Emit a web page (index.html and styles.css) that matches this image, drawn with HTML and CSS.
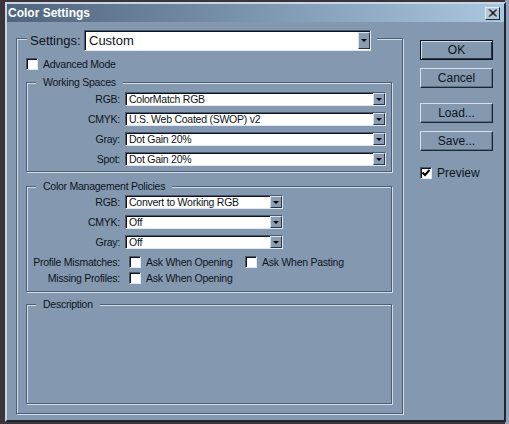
FILE: index.html
```html
<!DOCTYPE html>
<html lang="en">
<head>
    <meta charset="UTF-8">
    <title>Color Settings</title>
    <link rel="stylesheet" href="styles.css">
</head>
<body>

    <div class="window">
        <div class="titlebar">
            <span class="title">Color Settings</span>
            <div class="close">
                <svg width="9" height="8" viewBox="0 0 9 8"><path d="M1 0.5 L8 7.5 M2 0.5 L9 7.5 M8 0.5 L1 7.5 M9 0.5 L2 7.5" stroke="#000" stroke-width="1"/></svg>
            </div>
        </div>

        <div class="content">
            <div class="group outer">
                <div class="settings-legend">
                    <span class="settings-label">Settings:</span>
                    <div class="select big"><span class="value">Custom</span><span class="arrow"></span></div>
                </div>

                <div class="check-row adv">
                    <span class="check"></span><span>Advanced Mode</span>
                </div>

                <div class="group ws">
                    <div class="legend">Working Spaces</div>
                    <div class="rows">
                        <span class="lbl">RGB:</span>
                        <div class="select wide"><span class="value">ColorMatch RGB</span><span class="arrow"></span></div>
                        <span class="lbl">CMYK:</span>
                        <div class="select wide"><span class="value">U.S. Web Coated (SWOP) v2</span><span class="arrow"></span></div>
                        <span class="lbl">Gray:</span>
                        <div class="select wide"><span class="value">Dot Gain 20%</span><span class="arrow"></span></div>
                        <span class="lbl">Spot:</span>
                        <div class="select wide"><span class="value">Dot Gain 20%</span><span class="arrow"></span></div>
                    </div>
                </div>

                <div class="group cm">
                    <div class="legend">Color Management Policies</div>
                    <div class="rows">
                        <span class="lbl">RGB:</span>
                        <div class="select narrow"><span class="value">Convert to Working RGB</span><span class="arrow"></span></div>
                        <span class="lbl">CMYK:</span>
                        <div class="select narrow"><span class="value">Off</span><span class="arrow"></span></div>
                        <span class="lbl">Gray:</span>
                        <div class="select narrow"><span class="value">Off</span><span class="arrow"></span></div>
                    </div>
                    <div class="checks">
                        <span class="lbl">Profile Mismatches:</span>
                        <div class="opts">
                            <div class="check-row opt"><span class="check"></span><span>Ask When Opening</span></div>
                            <div class="check-row"><span class="check"></span><span>Ask When Pasting</span></div>
                        </div>
                        <span class="lbl">Missing Profiles:</span>
                        <div class="opts">
                            <div class="check-row opt"><span class="check"></span><span>Ask When Opening</span></div>
                        </div>
                    </div>
                </div>

                <div class="group desc">
                    <div class="legend">Description</div>
                </div>
            </div>

            <div class="side">
                <div class="btn default">OK</div>
                <div class="btn">Cancel</div>
                <div class="btn gap">Load...</div>
                <div class="btn">Save...</div>
                <div class="check-row preview">
                    <span class="check">
                        <svg width="8" height="8" viewBox="0 0 8 8"><path d="M0.5 3.5 L3 6 L7.5 1" stroke="#000" stroke-width="2" fill="none"/></svg>
                    </span>
                    <span>Preview</span>
                </div>
            </div>
        </div>
    </div>

</body>
</html>
```

FILE: styles.css
```css
* {
    box-sizing: border-box;
    margin: 0;
    padding: 0;
}

body {
    background: linear-gradient(to right, #3b3439 calc(100% - 4px), #8ea2b9 0);
    font-family: "Liberation Sans", Arial, sans-serif;
    font-size: 10.5px;
    letter-spacing: -0.25px;
    color: #0d1420;
    padding: 2px 0 0 5px;
    height: 424px;
    overflow: hidden;
}

.window {
    width: 501px;
    height: 420px;
    background: #8499b0;
    border: 2px solid;
    border-color: #c9d5e2 #1d2633 #1d2633 #c9d5e2;
}

.titlebar {
    height: 18px;
    display: flex;
    align-items: center;
    padding-left: 1px;
    background: linear-gradient(to right, #4e647c, #8eaac2 70%, #a9c7de);
}

.title {
    color: #fff;
    font-weight: bold;
    font-size: 12px;
    letter-spacing: 0;
}

.close {
    margin-left: auto;
    margin-right: 4px;
    width: 15px;
    height: 13px;
    display: flex;
    align-items: center;
    justify-content: center;
    background: #b4c8da;
    border: 1px solid;
    border-color: #e4ecf4 #1d2633 #1d2633 #e4ecf4;
}

.content {
    display: flex;
    padding: 16px 0 0 9px;
}

/* etched group boxes */
.group {
    border: 1px solid #4d5f75;
    box-shadow: inset 1px 1px 0 #d0dcea, 1px 1px 0 #d0dcea;
}

.outer {
    width: 387px;
    height: 376px;
    display: flex;
    flex-direction: column;
}

.settings-legend {
    display: flex;
    align-items: center;
    align-self: flex-start;
    margin: -9px 0 0 10px;
    padding: 0 6px 0 3px;
    background: #8499b0;
}

.settings-label {
    width: 54px;
    font-size: 13px;
    letter-spacing: 0;
}

.legend {
    display: table;
    margin: -7px 0 0 9px;
    padding: 0 7px;
    line-height: 13px;
    background: #8499b0;
}

.ws, .cm, .desc {
    width: 366px;
    margin-left: 9px;
}

.ws {
    height: 90px;
    margin-top: 12px;
}

.cm {
    height: 106px;
    margin-top: 14px;
}

.desc {
    height: 100px;
    margin-top: 12px;
}

.rows, .checks {
    display: grid;
    grid-template-columns: 93px auto;
    column-gap: 5px;
    align-items: center;
}

.rows {
    row-gap: 6px;
    margin-top: 3px;
}

.cm .rows {
    margin-top: 2px;
}

.checks {
    row-gap: 4px;
    margin-top: 7px;
    line-height: 12px;
}

.lbl {
    justify-self: end;
    white-space: nowrap;
}

.opts {
    display: flex;
    padding-left: 4px;
}

.opt {
    width: 116px;
}

/* dropdowns */
.select {
    display: flex;
    align-items: stretch;
    height: 14px;
    background: #fff;
    border: 1px solid;
    border-color: #4a5a6e #e0e8f0 #e0e8f0 #4a5a6e;
    box-shadow: inset 1px 1px 0 #0d1420;
}

.select .value {
    flex: 1;
    padding: 1px 0 0 3px;
    line-height: 11px;
    white-space: nowrap;
    overflow: hidden;
}

.wide {
    width: 261px;
}

.narrow {
    width: 158px;
}

.big {
    width: 287px;
    height: 21px;
}

.big .value {
    font-size: 13px;
    letter-spacing: 0;
    line-height: 17px;
    padding: 1px 0 0 4px;
}

.arrow {
    width: 12px;
    display: flex;
    align-items: center;
    justify-content: center;
    background: #8a9cb1;
    border: 1px solid;
    border-color: #d8e2ec #2a3545 #2a3545 #d8e2ec;
}

.big .arrow {
    margin: 1px 0;
    height: 17px;
}

.arrow::after {
    content: "";
    border-left: 3px solid transparent;
    border-right: 3px solid transparent;
    border-top: 3px solid #000;
}

/* checkboxes */
.check-row {
    display: flex;
    align-items: center;
    gap: 5px;
    white-space: nowrap;
}

.check {
    width: 12px;
    height: 12px;
    display: flex;
    align-items: center;
    justify-content: center;
    background: #fff;
    border: 1px solid;
    border-color: #4a5a6e #e0e8f0 #e0e8f0 #4a5a6e;
    box-shadow: inset 1px 1px 0 #0d1420;
}

.adv {
    margin: 7px 0 0 9px;
    height: 12px;
}

/* right column */
.side {
    width: 73px;
    margin-left: 17px;
    padding-top: 2px;
    display: flex;
    flex-direction: column;
    gap: 8px;
}

.btn {
    height: 20px;
    display: flex;
    align-items: center;
    justify-content: center;
    font-size: 12px;
    letter-spacing: 0;
    border: 1px solid;
    border-color: #d4dfeb #1d2633 #1d2633 #d4dfeb;
    box-shadow: inset -1px -1px 0 #5c6f86;
}

.btn.default {
    border-color: #0d1420;
    box-shadow: inset 1px 1px 0 #d4dfeb, inset -1px -1px 0 #2a3545;
}

.btn.gap {
    margin-top: 7px;
}

.preview {
    margin-top: 7px;
    font-size: 12px;
    letter-spacing: 0;
}
```
